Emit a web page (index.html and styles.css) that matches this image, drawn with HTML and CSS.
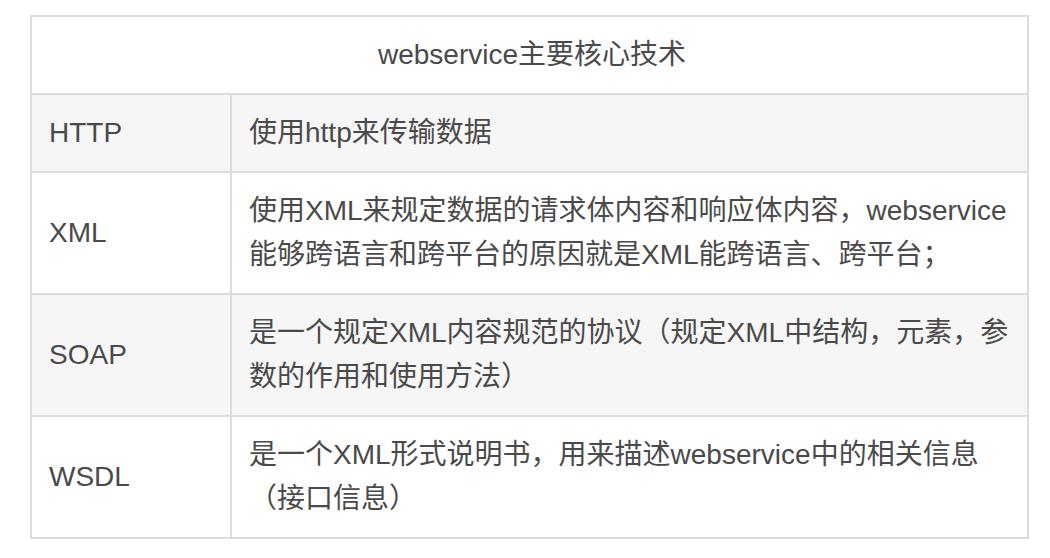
FILE: index.html
```html
<!DOCTYPE html>
<html lang="zh-CN">
<head>
<meta charset="utf-8">
<title>webservice主要核心技术</title>
<link rel="stylesheet" href="styles.css">
</head>
<body>
<table class="tech-table">
  <colgroup>
    <col class="col-name">
    <col class="col-desc">
  </colgroup>
  <thead>
    <tr>
      <th class="head-cell" colspan="2">webservice主要核心技术</th>
    </tr>
  </thead>
  <tbody>
    <tr class="row-alt">
      <td class="name-cell">HTTP</td>
      <td class="desc-cell">使用http来传输数据</td>
    </tr>
    <tr>
      <td class="name-cell">XML</td>
      <td class="desc-cell">使用XML来规定数据的请求体内容和响应体内容，webservice<br>能够跨语言和跨平台的原因就是XML能跨语言、跨平台；</td>
    </tr>
    <tr class="row-alt">
      <td class="name-cell">SOAP</td>
      <td class="desc-cell">是一个规定XML内容规范的协议（规定XML中结构，元素，参<br>数的作用和使用方法）</td>
    </tr>
    <tr>
      <td class="name-cell">WSDL</td>
      <td class="desc-cell">是一个XML形式说明书，用来描述webservice中的相关信息<br>（接口信息）</td>
    </tr>
  </tbody>
</table>
</body>
</html>
```

FILE: styles.css
```css
html, body {
  margin: 0;
  padding: 0;
  background: #ffffff;
}

body {
  padding: 15px 0 0 30px;
  font-family: "Liberation Sans", "Noto Sans CJK SC", sans-serif;
  font-size: 28px;
  line-height: 44px;
  color: #4a4a4a;
}

.tech-table {
  border-collapse: separate;
  border-spacing: 0;
  width: 999px;
  table-layout: fixed;
  border-top: 2px solid #dcdcdc;
  border-left: 2px solid #dcdcdc;
}

.col-name {
  width: 200px;
}

.col-desc {
  width: 797px;
}

.tech-table th,
.tech-table td {
  box-sizing: border-box;
  border-right: 2px solid #dcdcdc;
  border-bottom: 2px solid #dcdcdc;
  padding: 16px 12px 16px 17px;
  vertical-align: middle;
  font-weight: normal;
  white-space: nowrap;
}

.head-cell {
  text-align: center;
  background: #ffffff;
}

.name-cell,
.desc-cell {
  text-align: left;
}

.row-alt td {
  background: #f6f6f6;
}
```
